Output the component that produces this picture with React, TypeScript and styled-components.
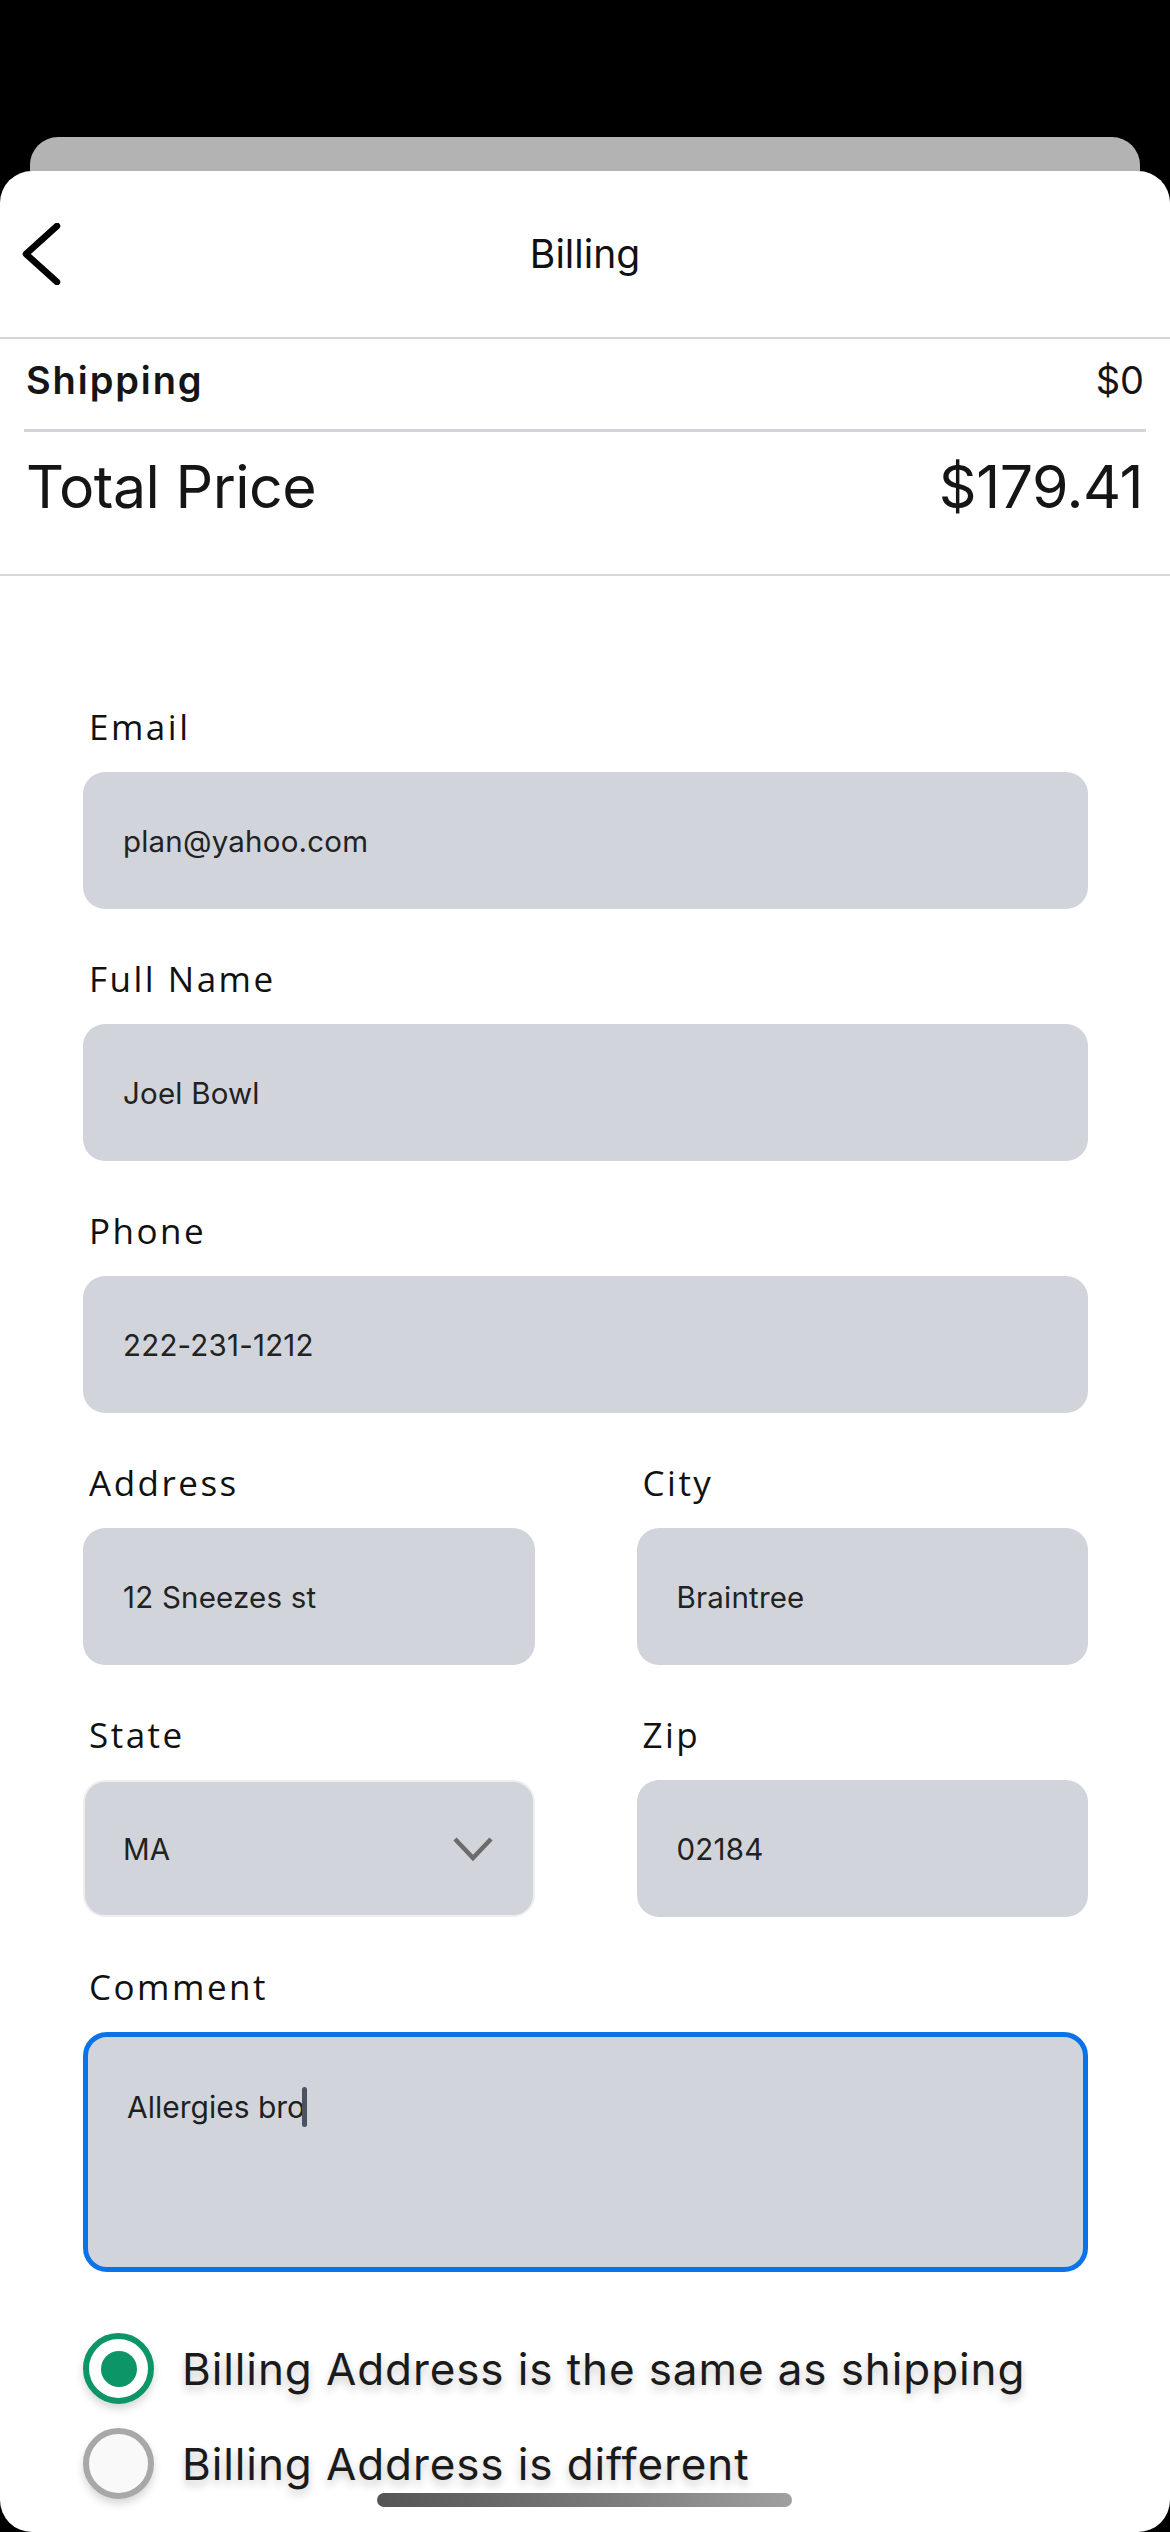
import React from "react";
import styled, { createGlobalStyle } from "styled-components";

const Global = createGlobalStyle`
  html, body { margin: 0; padding: 0; background: #000; }
  * { box-sizing: border-box; }
`;

const Screen = styled.div`
  width: 1170px;
  height: 2532px;
  background: #000;
  padding-top: 137px;
  display: flex;
  flex-direction: column;
  overflow: hidden;
`;

const BackCard = styled.div`
  height: 34px;
  margin: 0 30px;
  background: #b3b3b3;
  border-radius: 28px 28px 0 0;
  flex: none;
`;

const Sheet = styled.div`
  position: relative;
  flex: 1;
  background: #fff;
  border-radius: 32px;
  overflow: hidden;
  display: flex;
  flex-direction: column;
  font-family: Inter, "Liberation Sans", sans-serif;
  color: #151515;
`;

const Header = styled.header`
  height: 168px;
  display: grid;
  grid-template-columns: 120px 1fr 120px;
  align-items: center;
  border-bottom: 2px solid #d6d6d6;
  flex: none;
`;

const BackButton = styled.button`
  border: none;
  background: none;
  padding: 0 0 0 22px;
  height: 70px;
  display: flex;
  align-items: center;
  cursor: pointer;
`;

const Title = styled.h1`
  margin: 0;
  text-align: center;
  font-size: 39px;
  font-weight: 400;
  line-height: 48px;
  color: #111;
`;

const Summary = styled.section`
  border-bottom: 2px solid #d6d6d6;
  flex: none;
`;

const SummaryRow = styled.div<{ $big?: boolean }>`
  display: flex;
  justify-content: space-between;
  align-items: baseline;
  padding: ${(p) => (p.$big ? "19px 27px 51px 26px" : "19px 26px 26px 26px")};
  font-size: ${(p) => (p.$big ? "59px" : "38px")};
  line-height: ${(p) => (p.$big ? "72px" : "45px")};
  letter-spacing: ${(p) => (p.$big ? "-0.5px" : "0")};
`;

const RowLabel = styled.span<{ $bold?: boolean }>`
  font-weight: ${(p) => (p.$bold ? 600 : 400)};
  letter-spacing: ${(p) => (p.$bold ? "1.9px" : "inherit")};
  color: #151515;
`;

const RowValue = styled.span`
  font-weight: 400;
  color: #151515;
`;

const InnerDivider = styled.hr`
  margin: 0 24px;
  border: none;
  height: 3px;
  background: #d1d5db;
`;

const Form = styled.form`
  padding: 130px 82px 0 83px;
  display: flex;
  flex-direction: column;
  gap: 49px;
`;

const Field = styled.div`
  display: flex;
  flex-direction: column;
  gap: 24px;
  min-width: 0;
`;

const Pair = styled.div`
  display: grid;
  grid-template-columns: 1fr 1fr;
  column-gap: 102px;
`;

const Label = styled.label`
  font-family: "Open Sans", "Noto Sans", sans-serif;
  font-size: 35px;
  font-weight: 500;
  letter-spacing: 2.5px;
  line-height: 42px;
  padding-left: 6px;
  color: #111;
`;

const TextInput = styled.input`
  width: 100%;
  height: 137px;
  border: none;
  outline: none;
  border-radius: 22px;
  background: #d1d5db;
  padding: 0 40px;
  font-family: Inter, "Liberation Sans", sans-serif;
  font-size: 29.5px;
  letter-spacing: 0.2px;
  color: #222;
`;

const Select = styled.div`
  height: 137px;
  border-radius: 22px;
  border: 2px solid #eeeeee;
  background: #d1d5db;
  padding: 0 40px 0 38px;
  display: flex;
  align-items: center;
  justify-content: space-between;
  font-size: 29.5px;
  color: #222;
`;

const TextArea = styled.div`
  height: 240px;
  border-radius: 24px;
  border: 5px solid #0a74e6;
  background: #d1d5db;
  padding: 50px 39px 0;
  font-size: 30px;
  line-height: 36px;
  color: #1f1f1f;
`;

const Caret = styled.span`
  display: inline-block;
  width: 5px;
  height: 40px;
  margin-left: -3px;
  border-radius: 3px;
  background: #4b5260;
  vertical-align: -9px;
`;

const RadioGroup = styled.div`
  margin-top: 61px;
  display: flex;
  flex-direction: column;
  gap: 24px;
  padding-left: 83px;
`;

const RadioRow = styled.div`
  display: flex;
  align-items: center;
  gap: 28px;
`;

const RadioCircle = styled.span<{ $checked?: boolean }>`
  width: 71px;
  height: 71px;
  border-radius: 50%;
  flex: none;
  border: 6px solid ${(p) => (p.$checked ? "#0c9566" : "#a8a8a8")};
  background: ${(p) => (p.$checked ? "#fff" : "#f9f9f9")};
  display: flex;
  align-items: center;
  justify-content: center;
  box-shadow: 0 5px 9px rgba(0, 0, 0, 0.16);
`;

const RadioDot = styled.span`
  width: 36px;
  height: 36px;
  border-radius: 50%;
  background: #0c9566;
`;

const RadioLabel = styled.span`
  font-size: 44px;
  line-height: 54px;
  letter-spacing: 0.9px;
  color: #1a1a1a;
  text-shadow: 0 5px 8px rgba(0, 0, 0, 0.22);
`;

const HomeIndicator = styled.div`
  position: absolute;
  left: 377px;
  bottom: 25px;
  width: 415px;
  height: 14px;
  border-radius: 7px;
  background: linear-gradient(90deg, #555 0%, #7a7a7a 55%, #a0a0a0 100%);
`;

const Chevron = () => (
  <svg width="40" height="62" viewBox="0 0 40 62" fill="none">
    <path d="M35 3 L4 31 L35 59" stroke="#000" strokeWidth="6.5" strokeLinecap="round" strokeLinejoin="round" />
  </svg>
);

const DownChevron = () => (
  <svg width="40" height="24" viewBox="0 0 40 24" fill="none">
    <path d="M2 2 L20 21 L38 2" stroke="#6b6b6b" strokeWidth="4.5" />
  </svg>
);

export default function App() {
  return (
    <>
      <Global />
      <Screen>
        <BackCard />
        <Sheet>
          <Header>
            <BackButton aria-label="Back">
              <Chevron />
            </BackButton>
            <Title>Billing</Title>
            <span />
          </Header>
          <Summary>
            <SummaryRow>
              <RowLabel $bold>Shipping</RowLabel>
              <RowValue>$0</RowValue>
            </SummaryRow>
            <InnerDivider />
            <SummaryRow $big>
              <RowLabel>Total Price</RowLabel>
              <RowValue>$179.41</RowValue>
            </SummaryRow>
          </Summary>
          <Form onSubmit={(e) => e.preventDefault()}>
            <Field>
              <Label>Email</Label>
              <TextInput readOnly value="plan@yahoo.com" />
            </Field>
            <Field>
              <Label>Full Name</Label>
              <TextInput readOnly value="Joel Bowl" />
            </Field>
            <Field>
              <Label>Phone</Label>
              <TextInput readOnly value="222-231-1212" />
            </Field>
            <Pair>
              <Field>
                <Label>Address</Label>
                <TextInput readOnly value="12 Sneezes st" />
              </Field>
              <Field>
                <Label>City</Label>
                <TextInput readOnly value="Braintree" />
              </Field>
            </Pair>
            <Pair>
              <Field>
                <Label>State</Label>
                <Select>
                  <span>MA</span>
                  <DownChevron />
                </Select>
              </Field>
              <Field>
                <Label>Zip</Label>
                <TextInput readOnly value="02184" />
              </Field>
            </Pair>
            <Field>
              <Label>Comment</Label>
              <TextArea>
                Allergies bro<Caret />
              </TextArea>
            </Field>
          </Form>
          <RadioGroup>
            <RadioRow>
              <RadioCircle $checked>
                <RadioDot />
              </RadioCircle>
              <RadioLabel>Billing Address is the same as shipping</RadioLabel>
            </RadioRow>
            <RadioRow>
              <RadioCircle />
              <RadioLabel>Billing Address is different</RadioLabel>
            </RadioRow>
          </RadioGroup>
          <HomeIndicator />
        </Sheet>
      </Screen>
    </>
  );
}
